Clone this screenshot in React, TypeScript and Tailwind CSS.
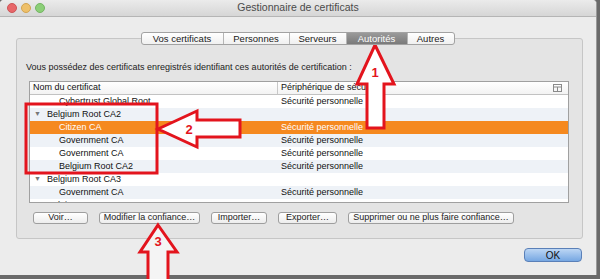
import React from 'react';

const font = { fontFamily: '"Liberation Sans", Arial, sans-serif' };

type Row = { name: string; device?: string; parent?: boolean; selected?: boolean };

const rows: Row[] = [
  { name: 'Cybertrust Global Root', device: 'Sécurité personnelle' },
  { name: 'Belgium Root CA2', parent: true },
  { name: 'Citizen CA', device: 'Sécurité personnelle', selected: true },
  { name: 'Government CA', device: 'Sécurité personnelle' },
  { name: 'Government CA', device: 'Sécurité personnelle' },
  { name: 'Belgium Root CA2', device: 'Sécurité personnelle' },
  { name: 'Belgium Root CA3', parent: true },
  { name: 'Government CA', device: 'Sécurité personnelle' },
  { name: 'Belgium Root CA4', parent: true },
];

const tabs = [
  { label: 'Vos certificats', w: 'w-[81px]' },
  { label: 'Personnes', w: 'w-[66px]' },
  { label: 'Serveurs', w: 'w-[57px]' },
  { label: 'Autorités', w: 'w-[61px]', active: true },
  { label: 'Autres', w: 'w-[47px]' },
];

const buttons = [
  { label: 'Voir…', w: 'w-[55px]' },
  { label: 'Modifier la confiance…', w: 'w-[101px]' },
  { label: 'Importer…', w: 'w-[56px]' },
  { label: 'Exporter…', w: 'w-[59px]' },
  { label: 'Supprimer ou ne plus faire confiance…', w: 'w-[166px]' },
];

export default function App() {
  return (
    <div className="relative w-[600px] h-[279px] overflow-hidden bg-[#6a6a6a]" style={font}>
      <div className="w-[597px] h-[275px] bg-[#ececec] rounded-t-[4px] flex flex-col border-r border-[#9a9a9a]">
        {/* title bar */}
        <div className="h-[17px] relative flex items-center justify-center bg-gradient-to-b from-[#ebebeb] to-[#d6d6d6] border-b border-[#b5b5b5] rounded-t-[4px]">
          <div className="absolute left-[7px] top-[3px] flex gap-[4px]">
            <span className="w-[10px] h-[10px] rounded-full bg-[#e8676a] border border-[#cc5557]" />
            <span className="w-[10px] h-[10px] rounded-full bg-[#eec06a] border border-[#d2a452]" />
            <span className="w-[10px] h-[10px] rounded-full bg-[#8ccf78] border border-[#74b563]" />
          </div>
          <span className="text-[10.5px] text-[#4a4a4a]">Gestionnaire de certificats</span>
        </div>

        {/* body */}
        <div className="flex flex-col pt-[15px]">
          <div className="flex justify-center relative z-10 pr-[1px]">
            <div className="flex h-[13px] border border-[#a2a2a2] rounded-[3px] overflow-hidden bg-gradient-to-b from-white to-[#f0f0f0]">
              {tabs.map((t, i) => (
                <div
                  key={t.label}
                  className={`${t.w} flex items-center justify-center text-[9.5px] leading-none ${i > 0 ? 'border-l border-[#b5b5b5]' : ''} ${t.active ? 'bg-gradient-to-b from-[#9a9a9a] to-[#7a7a7a] text-white' : 'text-[#1a1a1a]'}`}
                >
                  {t.label}
                </div>
              ))}
            </div>
          </div>

          {/* group box */}
          <div className="-mt-[7px] ml-[16px] w-[567px] bg-[#e4e4e4] border border-[#c6c6c6] rounded-[3px] pt-[23px] pb-[14px] flex flex-col">
            <div className="pl-[9px] h-[12px] flex items-center text-[9px] text-[#222]">
              Vous possédez des certificats enregistrés identifiant ces autorités de certification :
            </div>
            <div className="mt-[7px] ml-[12px] w-[540px] h-[122px] border border-[#a0a0a0] bg-white overflow-hidden flex flex-col">
              <div className="h-[13px] shrink-0 flex items-center border-b border-[#c2c2c2] bg-gradient-to-b from-white to-[#f3f3f3] text-[9px] text-[#111]">
                <div className="w-[248px] pl-[3px] border-r border-[#c8c8c8] h-full flex items-center">Nom du certificat</div>
                <div className="flex-1 pl-[3px] flex items-center justify-between pr-[6px]">
                  <span>Périphérique de sécurité</span>
                  <svg width="9" height="8" viewBox="0 0 9 8">
                    <rect x="0.5" y="0.5" width="8" height="7" fill="none" stroke="#8a8a8a" />
                    <line x1="0.5" y1="3" x2="8.5" y2="3" stroke="#8a8a8a" />
                    <line x1="4.5" y1="3" x2="4.5" y2="7.5" stroke="#8a8a8a" />
                  </svg>
                </div>
              </div>
              {rows.map((r, i) => (
                <div
                  key={i}
                  className={`h-[13px] shrink-0 flex items-center text-[9px] ${r.selected ? 'bg-[#f5891f] text-white' : i % 2 === 0 ? 'bg-white text-[#111]' : 'bg-[#eef2f7] text-[#111]'}`}
                >
                  <div className={`w-[249px] flex items-center ${r.parent ? 'pl-[4px]' : 'pl-[29px]'}`}>
                    {r.parent && <span className="text-[7px] text-[#777] w-[13px]">▼</span>}
                    {r.name}
                  </div>
                  <div className="flex-1 pl-[2px]">{r.device}</div>
                </div>
              ))}
            </div>
            <div className="mt-[9px] ml-[16px] flex gap-[11px]">
              {buttons.map(b => (
                <div
                  key={b.label}
                  className={`${b.w} h-[12px] flex items-center justify-center text-[9px] text-[#222] rounded-[3px] border border-[#9e9e9e] bg-gradient-to-b from-white to-[#ededed]`}
                >
                  {b.label}
                </div>
              ))}
            </div>
          </div>

          <div className="mt-[9px] flex justify-end pr-[14px]">
            <div className="w-[58px] h-[14px] flex items-center justify-center text-[10px] text-[#111] rounded-[4px] border border-[#5a80b8] bg-gradient-to-b from-[#bcd6f4] to-[#76a7e2]">
              OK
            </div>
          </div>
        </div>
      </div>

      {/* annotations */}
      <svg className="absolute inset-0 pointer-events-none" width="600" height="279">
        <rect x="26" y="104" width="131" height="69" fill="none" stroke="#e3141d" strokeWidth="3" />
        <polygon points="375,45 394,84 384,84 384,128 367,128 367,84 357,84" fill="white" stroke="#e3141d" strokeWidth="3" strokeLinejoin="miter" />
        <text x="375" y="77" textAnchor="middle" fontSize="13" fontWeight="bold" fill="#e3141d" fontFamily="Liberation Sans, sans-serif">1</text>
        <polygon points="158,129 197,111 197,120 240,120 240,137 197,137 197,147" fill="white" stroke="#e3141d" strokeWidth="3" />
        <text x="189" y="134" textAnchor="middle" fontSize="13" fontWeight="bold" fill="#e3141d" fontFamily="Liberation Sans, sans-serif">2</text>
        <polygon points="158,225 177,252 168,252 168,284 148,284 148,252 140,252" fill="#f4f4f4" stroke="#e3141d" strokeWidth="3" />
        <text x="158" y="246" textAnchor="middle" fontSize="13" fontWeight="bold" fill="#e3141d" fontFamily="Liberation Sans, sans-serif">3</text>
      </svg>
    </div>
  );
}
